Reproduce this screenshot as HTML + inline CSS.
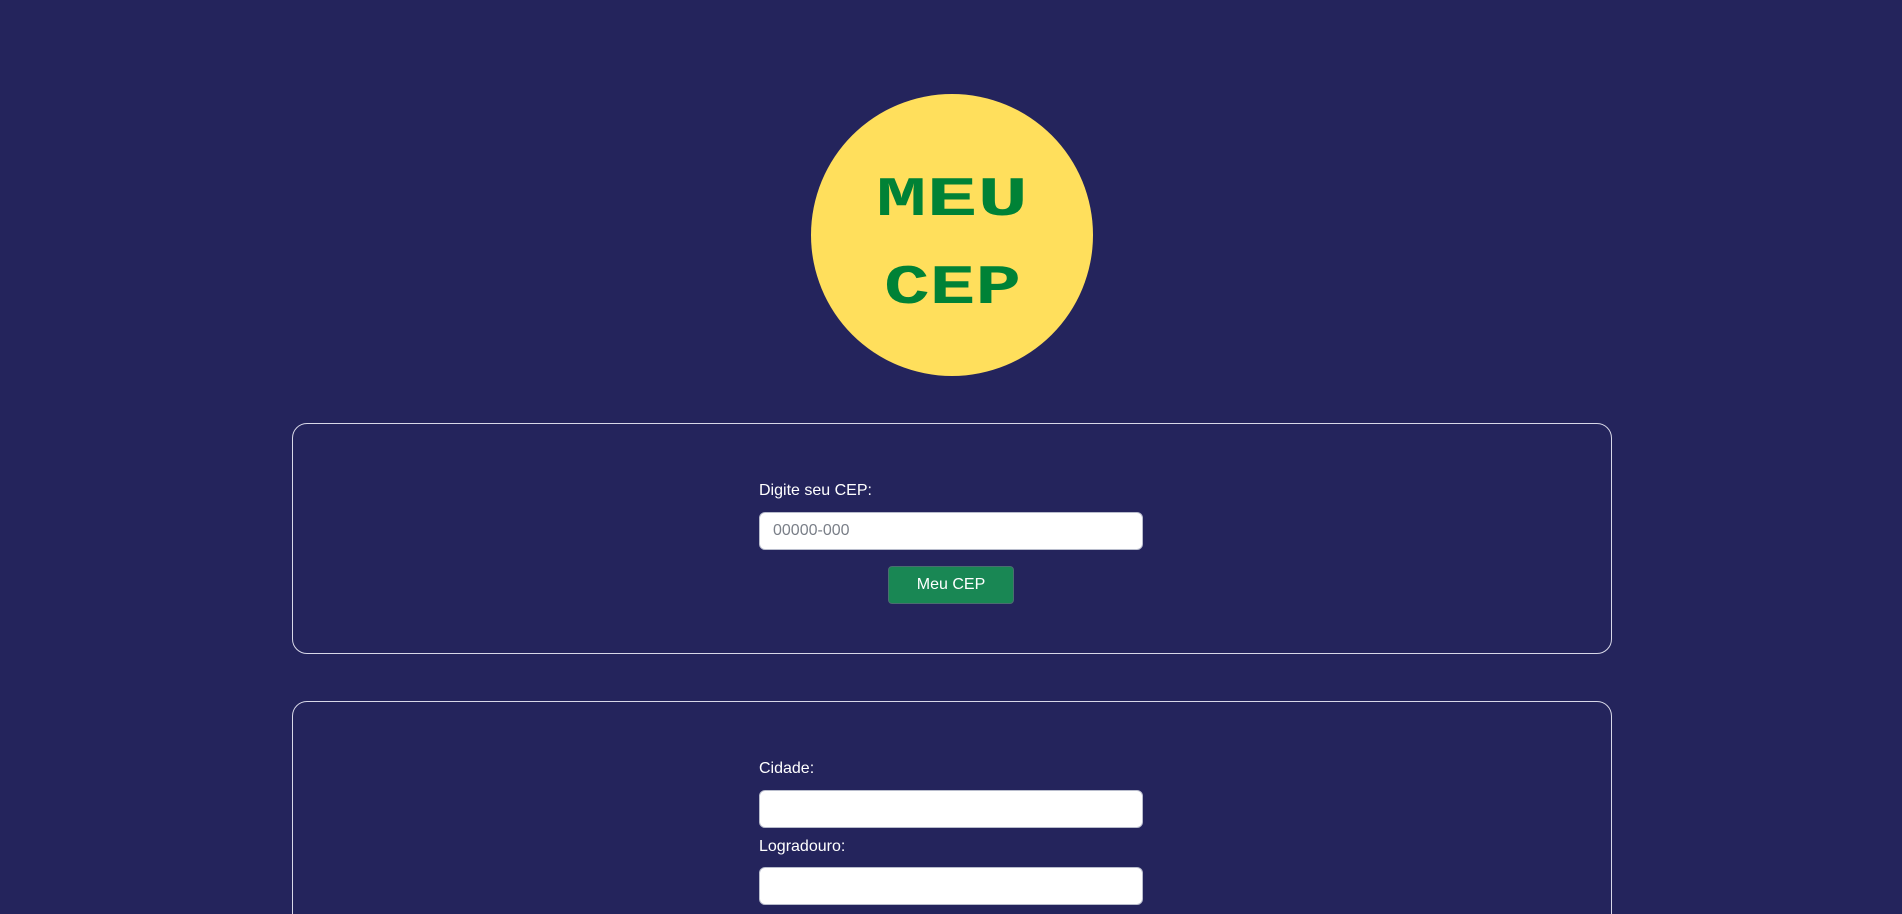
<!DOCTYPE html>
<html><head><meta charset="utf-8"><style>
html,body{margin:0;padding:0;overflow:hidden;width:1902px;height:914px;}
body{background:#24245c;font-family:"Liberation Sans",Arial,sans-serif;}
.wrap{position:relative;width:1902px;height:914px;overflow:hidden;}
.logo{position:absolute;left:811px;top:94px;width:282px;height:282px;border-radius:50%;background:#ffdf5c;}
.box{position:absolute;left:292px;width:1318px;border:1px solid #d8d8e8;border-radius:15px;}
.lbl{position:absolute;left:759px;color:#fff;font-size:16px;line-height:18px;}
.inp{position:absolute;left:759px;width:382px;height:36px;background:#fff;border:1px solid #b8bccc;border-radius:6px;}
.ph{position:absolute;left:13px;top:9px;color:#7a7f88;font-size:16px;}
.btn{position:absolute;left:888px;top:566px;width:124px;height:36px;background:#198754;border:1px solid #4a6d70;border-radius:4px;color:#fff;font-size:16px;text-align:center;line-height:36px;}
</style></head><body><div class="wrap">
<div class="logo">
<svg width="282" height="282" viewBox="0 0 282 282">
<text x="65" y="121" textLength="152" lengthAdjust="spacingAndGlyphs" font-family="Liberation Mono, monospace" font-weight="bold" font-size="56" fill="#008236">MEU</text>
<text x="73" y="209" textLength="137" lengthAdjust="spacingAndGlyphs" font-family="Liberation Mono, monospace" font-weight="bold" font-size="56" fill="#008236">CEP</text>
</svg>
</div>
<div class="box" style="top:423px;height:229px;"></div>
<div class="lbl" style="top:482px;">Digite seu CEP:</div>
<div class="inp" style="top:512px;"><span class="ph">00000-000</span></div>
<div class="btn">Meu CEP</div>
<div class="box" style="top:701px;height:260px;"></div>
<div class="lbl" style="top:760px;">Cidade:</div>
<div class="inp" style="top:790px;"></div>
<div class="lbl" style="top:838px;">Logradouro:</div>
<div class="inp" style="top:867px;"></div>
</div></body></html>
